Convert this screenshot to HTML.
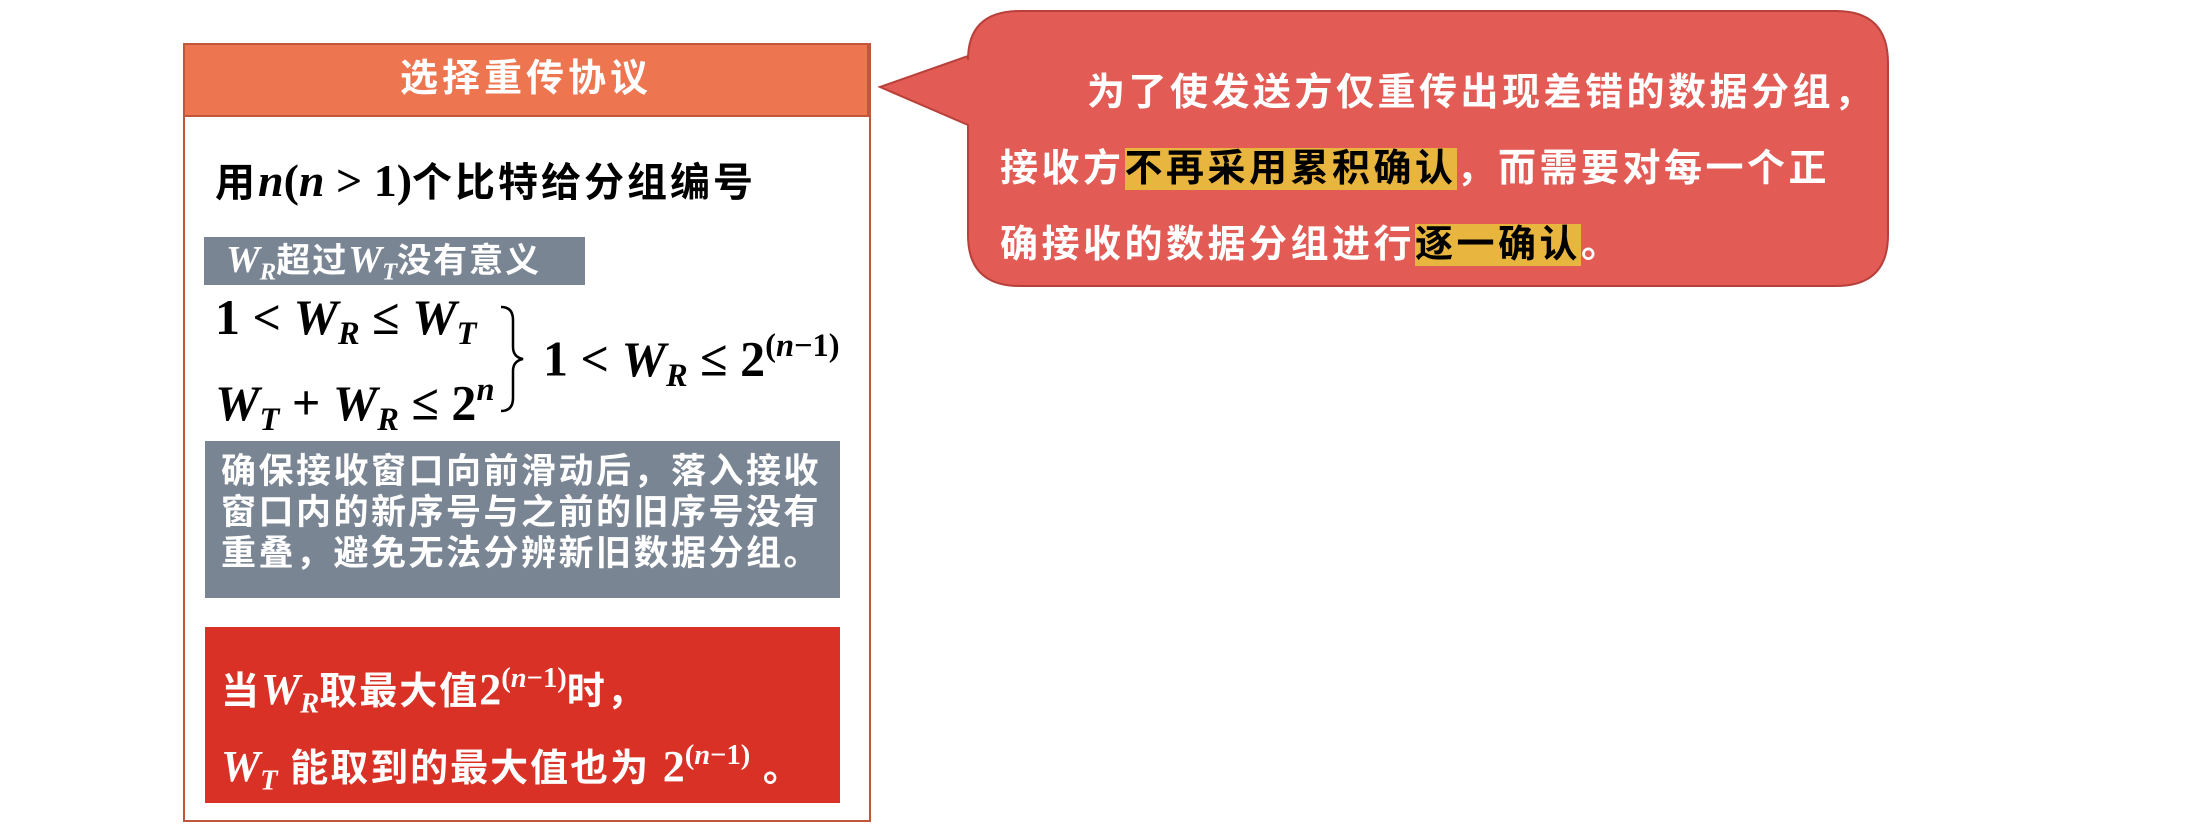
<!DOCTYPE html>
<html><head><meta charset="utf-8"><style>
body{margin:0;width:2190px;height:832px;background:#fff;position:relative;overflow:hidden;font-family:"Liberation Sans","Noto Sans CJK SC",sans-serif;font-weight:bold}
.a{position:absolute;white-space:nowrap}
.m{font-family:"Liberation Serif","DejaVu Serif",serif;font-style:italic;font-weight:bold;letter-spacing:0}
.r{font-family:"Liberation Serif","DejaVu Serif",serif;font-weight:bold;letter-spacing:0}
sub{font-size:65%;vertical-align:-0.3em}
sup{font-size:65%;vertical-align:0.6em}
.h{background:#E8B53E;color:#000}
</style></head><body>
<div class="a" style="left:183px;top:43px;width:684px;height:775px;border:2px solid #C0573A;"></div>
<div class="a" style="left:183px;top:43px;width:686px;height:74px;background:#ED7550;border:2px solid #C0573A;box-sizing:border-box;color:#fff;font-size:38px;letter-spacing:4px;text-align:center;line-height:68px">选择重传协议</div>
<div class="a" style="left:215px;top:150px;font-size:40px;letter-spacing:3px;color:#000">用<span class="m" style="font-size:46px">n</span><span class="r" style="font-size:46px">(</span><span class="m" style="font-size:46px">n</span><span class="r" style="font-size:46px"> &gt; 1)</span>个比特给分组编号</div>
<div class="a" style="left:204px;top:237px;width:381px;height:48px;background:#7A8594;color:#fff;font-size:34px;letter-spacing:2px;line-height:46px;padding-left:22px;box-sizing:border-box"><span class="m" style="font-size:38px">W<sub>R</sub></span>超过<span class="m" style="font-size:38px">W<sub>T</sub></span>没有意义</div>
<div class="a r" style="left:215px;top:288px;font-size:50px;color:#000">1 &lt; <span class="m">W<sub>R</sub></span> ≤ <span class="m">W<sub>T</sub></span></div>
<div class="a r" style="left:215px;top:372px;font-size:50px;color:#000"><span class="m">W<sub>T</sub></span> + <span class="m">W<sub>R</sub></span> ≤ 2<sup class="m">n</sup></div>
<svg class="a" style="left:495px;top:305px" width="40" height="110"><path d="M6 2 Q18 2 18 15 L18 42 Q18 52 28 54 Q18 56 18 66 L18 93 Q18 106 6 106" fill="none" stroke="#000" stroke-width="2.5"/></svg>
<div class="a r" style="left:543px;top:328px;font-size:50px;color:#000">1 &lt; <span class="m">W<sub>R</sub></span> ≤ 2<sup>(<i>n</i>−1)</sup></div>
<div class="a" style="left:205px;top:441px;width:635px;height:157px;background:#7A8594;color:#fff;font-size:35px;letter-spacing:2.5px;line-height:41px;padding:10px 0 0 16px;box-sizing:border-box">确保接收窗口向前滑动后，落入接收<br>窗口内的新序号与之前的旧序号没有<br>重叠，避免无法分辨新旧数据分组。</div>
<div class="a" style="left:205px;top:627px;width:635px;height:176px;background:#D93126;color:#fff;font-size:38px;letter-spacing:2px;box-sizing:border-box">
<div class="a" style="left:16px;top:33px">当<span class="m" style="font-size:44px">W<sub>R</sub></span>取最大值<span class="r" style="font-size:44px">2<sup>(<i>n</i>−1)</sup></span>时，</div>
<div class="a" style="left:16px;top:110px"><span class="m" style="font-size:44px">W<sub>T</sub></span> 能取到的最大值也为 <span class="r" style="font-size:44px">2<sup>(<i>n</i>−1)</sup></span> 。</div>
</div>
<svg class="a" style="left:870px;top:0" width="1030" height="300"><path d="M98 56 L98 60 Q98 11 150 11 L966 11 Q1018 11 1018 63 L1018 235 Q1018 286 966 286 L150 286 Q98 286 98 235 L98 125 L10 87 Z" fill="#E35B55" stroke="#B8403B" stroke-width="2"/></svg>
<div class="a" style="left:1000px;top:55px;font-size:38px;letter-spacing:3.5px;color:#fff;line-height:76px">
<div style="padding-left:87px">为了使发送方仅重传出现差错的数据分组，</div>
<div>接收方<span class="h">不再采用累积确认</span>，而需要对每一个正</div>
<div>确接收的数据分组进行<span class="h">逐一确认</span>。</div>
</div>
</body></html>
